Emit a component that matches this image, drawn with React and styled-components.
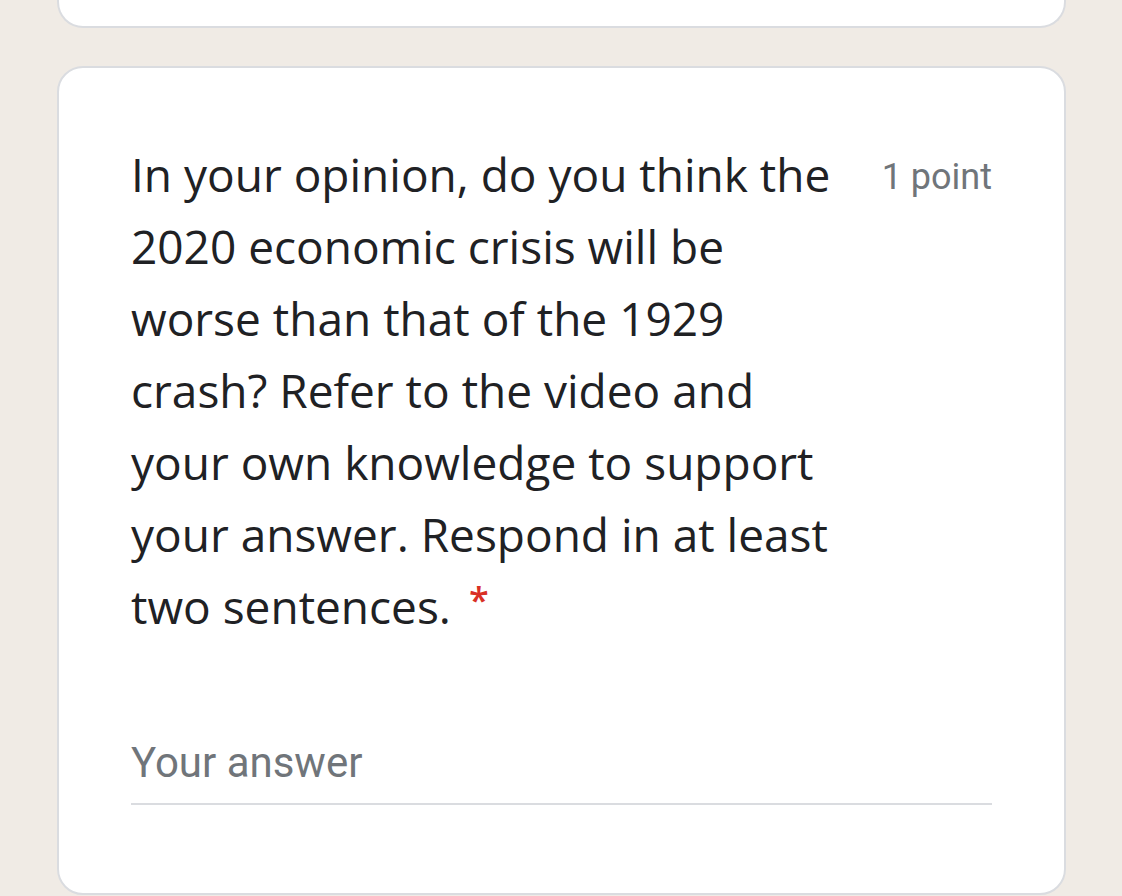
import styled, { createGlobalStyle } from "styled-components";

const Global = createGlobalStyle`
    html, body {
        margin: 0;
        padding: 0;
        background: #f0ebe5;
    }
`

export default function App(){
    return(
        <Page>
            <Global />
            <PrevCard />
            <Card>
                <TitleRow>
                    <Question>
                        In your opinion, do you think the 2020 economic crisis will be worse than that of the 1929 crash? Refer to the video and your own knowledge to support your answer. Respond in at least two sentences.<Required>*</Required>
                    </Question>
                    <Points>1 point</Points>
                </TitleRow>
                <Answer placeholder="Your answer" />
            </Card>
        </Page>
    )
}

const Page = styled.div`
    width: 1122px;
    height: 896px;
    overflow: hidden;
    padding: 0 56px 0 57px;
    box-sizing: border-box;
    display: flex;
    flex-direction: column;
    gap: 38px;
`

const PrevCard = styled.div`
    height: 28px;
    flex-shrink: 0;
    background: #fff;
    border: 2px solid #dadce0;
    border-top: none;
    border-radius: 0 0 26px 26px;
    box-sizing: border-box;
`

const Card = styled.div`
    flex-shrink: 0;
    background: #fff;
    border: 2px solid #dadce0;
    border-radius: 26px;
    padding: 70px 72px 88px 72px;
    display: flex;
    flex-direction: column;
    gap: 96px;
`

const TitleRow = styled.div`
    display: flex;
    justify-content: space-between;
    align-items: flex-start;
`

const Question = styled.div`
    width: 720px;
    font-family: "Open Sans", sans-serif;
    font-size: 46px;
    line-height: 72px;
    color: #202124;
`

const Required = styled.span`
    display: inline-block;
    vertical-align: top;
    margin-left: 18px;
    font-size: 36px;
    font-weight: 600;
    line-height: 60px;
    color: #d93025;
`

const Points = styled.div`
    font-family: Roboto, sans-serif;
    font-size: 36px;
    line-height: 78px;
    color: #70757a;
    white-space: nowrap;
`

const Answer = styled.input`
    border: none;
    border-bottom: 2px solid #dadce0;
    outline: none;
    padding: 0 0 16px 0;
    font-family: Roboto, sans-serif;
    font-size: 42px;
    color: #202124;
    background: transparent;

    &::placeholder {
        color: #70757a;
    }
`
